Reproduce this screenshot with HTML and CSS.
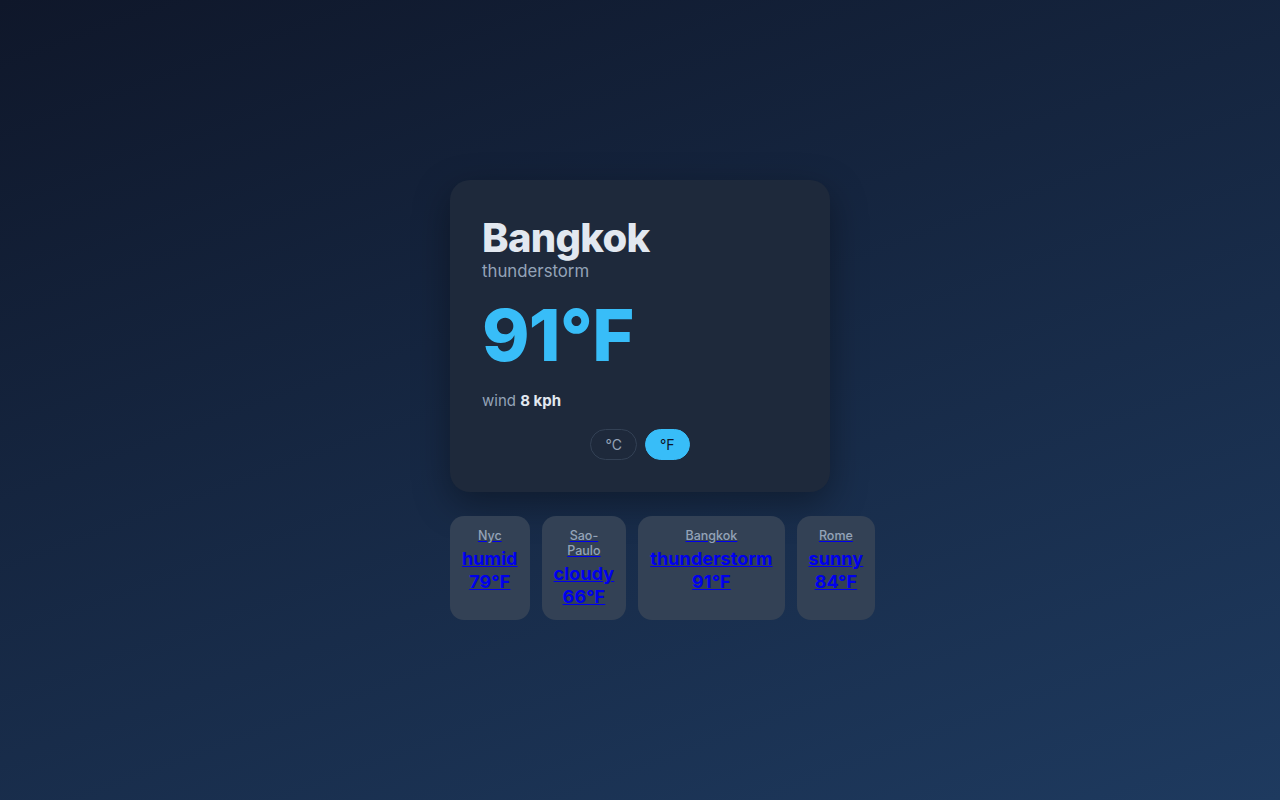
FILE: index.html
```html
<!DOCTYPE html>
<html lang="en">
<head>
<meta charset="utf-8">
<title>Weather</title>
<link rel="stylesheet" href="styles.css">
</head>
<body>
<main class="app">
  <section class="card">
    <h1 class="city">Bangkok</h1>
    <div class="cond">thunderstorm</div>
    <div class="temp">91°F</div>
    <div class="wind">wind <b>8 kph</b></div>
    <div class="units">
      <button class="unit">°C</button>
      <button class="unit active">°F</button>
    </div>
  </section>
  <nav class="others">
    <a class="mini" href="#"><span class="mini-name">Nyc</span><span class="mini-info">humid 79°F</span></a>
    <a class="mini" href="#"><span class="mini-name">Sao-Paulo</span><span class="mini-info">cloudy 66°F</span></a>
    <a class="mini" href="#"><span class="mini-name">Bangkok</span><span class="mini-info">thunderstorm 91°F</span></a>
    <a class="mini" href="#"><span class="mini-name">Rome</span><span class="mini-info">sunny 84°F</span></a>
  </nav>
</main>
</body>
</html>
```

FILE: styles.css
```css
* { box-sizing: border-box; }
html, body { height: 100%; }
body {
  margin: 0;
  font-family: Inter, "Noto Sans", sans-serif;
  background: linear-gradient(160deg, #0f172a 0%, #1e3a5f 100%);
  color: #e2e8f0;
  display: flex;
  align-items: center;
  justify-content: center;
}
.app {
  width: 380px;
  display: flex;
  flex-direction: column;
  gap: 24px;
}
.card {
  background: #1e293b;
  border-radius: 20px;
  padding: 32px;
  box-shadow: 0 12px 36px rgba(0, 0, 0, 0.35);
}
.city {
  margin: 0;
  font-size: 40px;
  font-weight: 800;
  line-height: 52px;
  letter-spacing: -0.7px;
  color: #e2e8f0;
}
.cond {
  font-size: 16.8px;
  line-height: 20px;
  color: #94a3b8;
  margin-top: -3px;
}
.temp {
  font-size: 72px;
  font-weight: 800;
  line-height: 1;
  color: #38bdf8;
  letter-spacing: -0.8px;
  margin-top: 18px;
}
.wind {
  font-size: 15px;
  color: #94a3b8;
  margin-top: 20px;
  line-height: 20px;
}
.wind b { color: #e2e8f0; font-weight: 700; }
.units {
  display: flex;
  justify-content: center;
  gap: 8px;
  margin-top: 18px;
}
.unit {
  font-family: inherit;
  font-size: 14px;
  height: 31px;
  padding: 0 14px;
  border-radius: 999px;
  border: 1px solid #334155;
  background: transparent;
  color: #94a3b8;
}
.unit.active {
  background: #38bdf8;
  border-color: #38bdf8;
  color: #0f172a;
}
.others {
  display: flex;
  gap: 12px;
}
.mini {
  background: #334155;
  border-radius: 14px;
  padding: 12px;
  display: flex;
  flex-direction: column;
  gap: 4px;
  text-align: center;
  font-weight: 700;
}
.mini-name {
  font-size: 12.5px;
  line-height: 15px;
  font-weight: 500;
  color: #94a3b8;
}
.mini-info {
  font-size: 18px;
  line-height: 23px;
  letter-spacing: 0.1px;
}
```
